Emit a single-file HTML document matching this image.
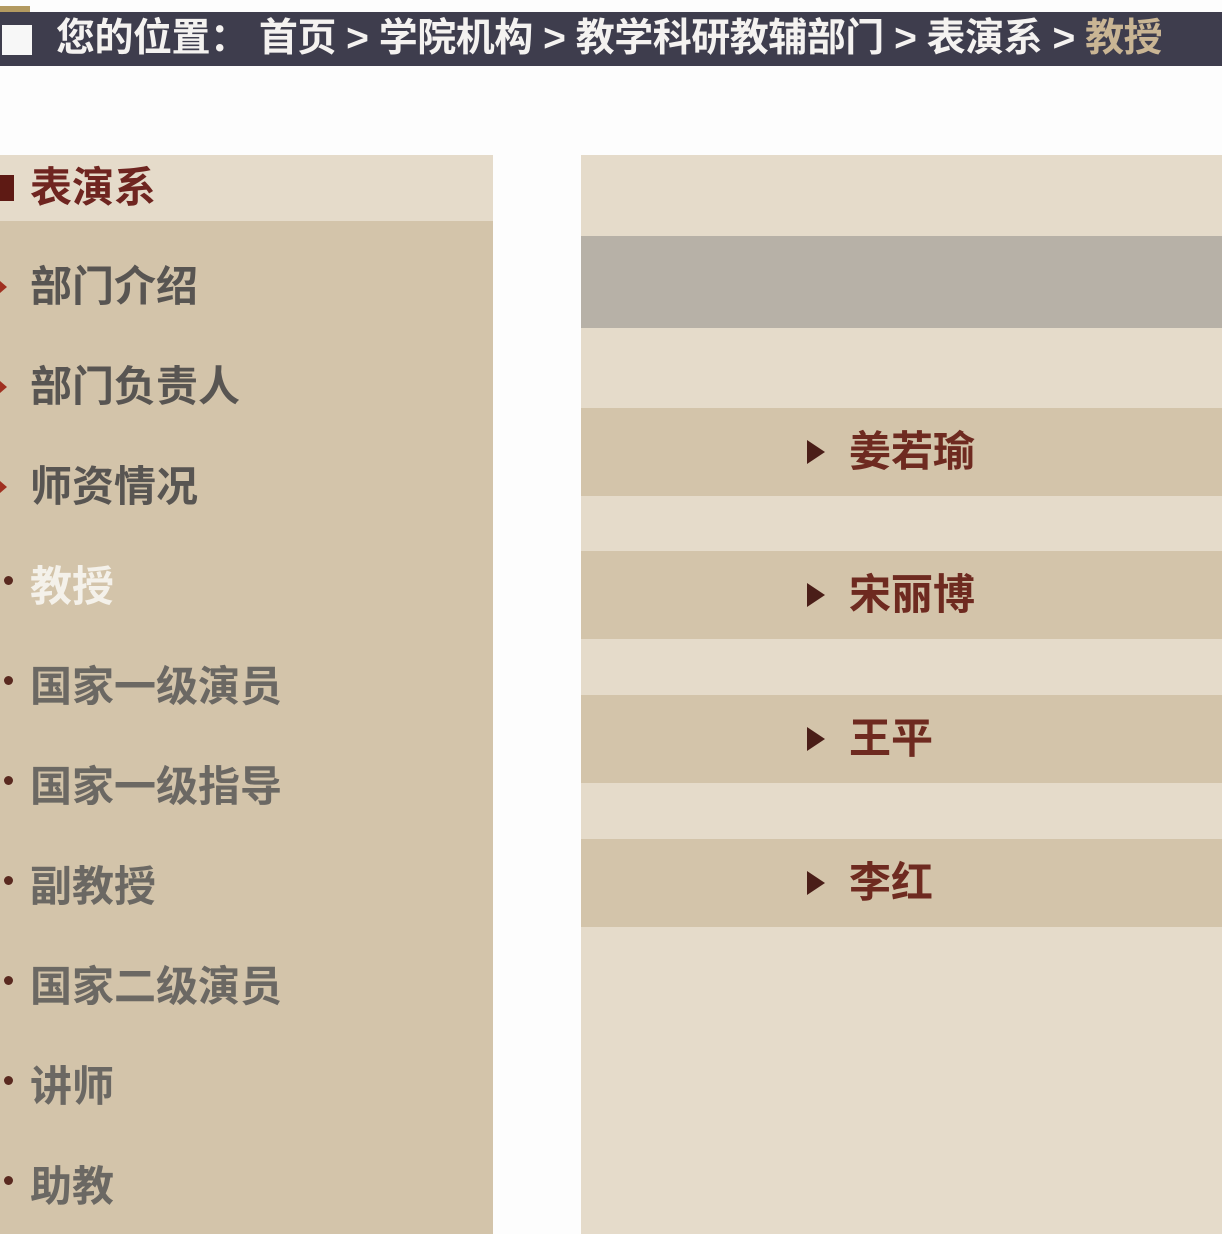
<!DOCTYPE html>
<html><head><meta charset="utf-8"><style>
*{margin:0;padding:0;box-sizing:border-box}
body{width:1222px;height:1234px;background:#fdfdfd;position:relative;overflow:hidden;font-family:"Liberation Sans","Noto Sans CJK SC","WenQuanYi Zen Hei",sans-serif;font-weight:bold}
.bar{position:absolute;left:0;top:12px;width:1222px;height:54px;background:#3e3d4d;color:#f4f2f0;font-size:39px;line-height:54px;white-space:nowrap}
.bar .sq{position:absolute;left:2px;top:13px;width:30px;height:30px;background:#f7f7f7}
.bar .t{position:absolute;left:56px;top:0;letter-spacing:-0.5px}
.bar .cur{color:#c9b594}
.left{position:absolute;left:0;top:155px;width:493px;height:1079px;background:#d3c4aa}
.lh{position:absolute;left:0;top:0;width:493px;height:66px;background:#e5dbca;color:#6f2520;font-size:42px;line-height:66px;padding-left:30px}
.lh i{position:absolute;left:0;top:20px;width:14px;height:26px;background:#5e1a14}
.it{position:absolute;left:30px;font-size:42px;line-height:50px;color:#6b6863}
.it.d{color:#585552}
.it.w{color:#f4f1ea}
.dot{position:absolute;left:4px;width:9px;height:9px;border-radius:50%;background:#5a2a20}
.ar{position:absolute;left:0;width:0;height:0;border-top:6px solid transparent;border-bottom:6px solid transparent;border-left:7px solid #a03020}
.right{position:absolute;left:581px;top:155px;width:641px;height:1079px;background:#e5dbca}
.gray{position:absolute;left:0;top:81px;width:641px;height:92px;background:#b7b1a7}
.row{position:absolute;left:0;width:641px;height:88px;background:#d3c4aa}
.row span{position:absolute;left:268px;top:19px;font-size:42px;line-height:50px;color:#6e2a20}
.row b{position:absolute;left:226px;top:32px;width:0;height:0;border-top:12px solid transparent;border-bottom:12px solid transparent;border-left:18px solid #4a1e18}
</style></head><body>
<div style="position:absolute;left:0;top:6px;width:30px;height:6px;background:#b39a60"></div>
<div class="bar"><div class="sq"></div><div class="t">您的位置： 首页 &gt; 学院机构 &gt; 教学科研教辅部门 &gt; 表演系 &gt; <span class="cur">教授</span></div></div>
<div class="left">
<div class="lh"><i></i>表演系</div>
<div class="ar" style="top:126px"></div><div class="it d" style="top:107px">部门介绍</div>
<div class="ar" style="top:226px"></div><div class="it d" style="top:207px">部门负责人</div>
<div class="ar" style="top:326px"></div><div class="it d" style="top:307px">师资情况</div>
<div class="dot" style="top:421px"></div><div class="it w" style="top:407px">教授</div>
<div class="dot" style="top:521px"></div><div class="it" style="top:507px">国家一级演员</div>
<div class="dot" style="top:621px"></div><div class="it" style="top:607px">国家一级指导</div>
<div class="dot" style="top:721px"></div><div class="it" style="top:707px">副教授</div>
<div class="dot" style="top:821px"></div><div class="it" style="top:807px">国家二级演员</div>
<div class="dot" style="top:921px"></div><div class="it" style="top:907px">讲师</div>
<div class="dot" style="top:1021px"></div><div class="it" style="top:1007px">助教</div>
</div>
<div class="right">
<div class="gray"></div>
<div class="row" style="top:253px"><b></b><span>姜若瑜</span></div>
<div class="row" style="top:396px"><b></b><span>宋丽博</span></div>
<div class="row" style="top:540px"><b></b><span>王平</span></div>
<div class="row" style="top:684px"><b></b><span>李红</span></div>
</div>
</body></html>
